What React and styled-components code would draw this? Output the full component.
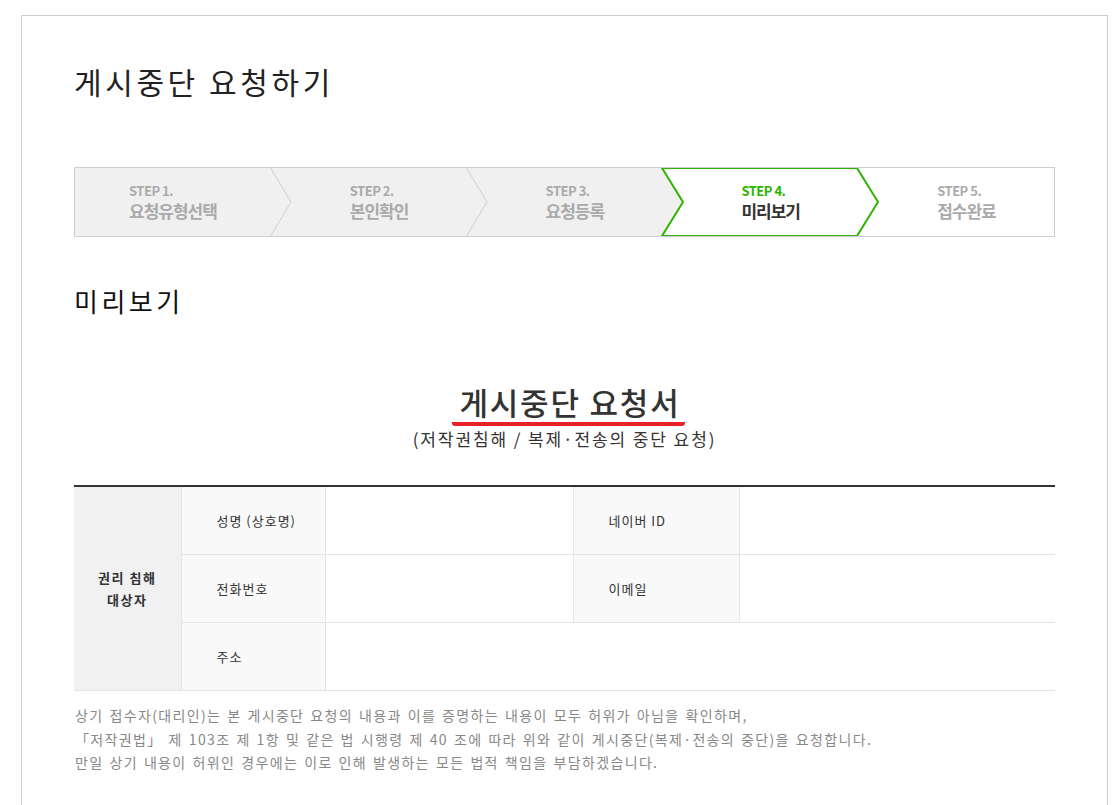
import React from "react";
import styled, { createGlobalStyle } from "styled-components";

const GlobalStyle = createGlobalStyle`
  html, body {
    margin: 0;
    padding: 0;
    background: #fff;
  }
  body {
    font-family: "Noto Sans CJK KR", "Noto Sans", sans-serif;
    color: #333;
  }
`;

const Page = styled.div`
  padding: 15px 0 0 21px;
`;

const Box = styled.main`
  width: 981px;
  padding: 40px 52px 60px;
  border: 1px solid #cfcfcf;
  border-bottom: none;
`;

const PageTitle = styled.h1`
  margin: 0;
  font-size: 30px;
  font-weight: 400;
  line-height: 50px;
  color: #222;
  letter-spacing: 3.6px;
`;

const StepBar = styled.ol`
  position: relative;
  margin: 61px 0 0;
  padding: 0;
  list-style: none;
  height: 68px;
  border: 1px solid #cfcfcf;
  display: grid;
  grid-template-columns: repeat(5, 1fr);
`;

const StepShape = styled.svg`
  position: absolute;
  inset: 0;
  z-index: 0;
`;

const Step = styled.li`
  position: relative;
  z-index: 1;
  display: flex;
  flex-direction: column;
  justify-content: center;
  gap: 1px;
  padding-left: ${(p) => (p.$first ? "54px" : "79px")};
  font-weight: 700;
  letter-spacing: -0.5px;
`;

const StepNo = styled.span`
  font-size: 13px;
  line-height: 16px;
  color: ${(p) => (p.$active ? "#2db400" : "#aaa")};
`;

const StepName = styled.span`
  font-size: 17px;
  line-height: 22px;
  color: ${(p) => (p.$active ? "#333" : "#aaa")};
  letter-spacing: -1px;
`;

const SectionTitle = styled.h2`
  margin: 48px 0 0;
  font-size: 26px;
  font-weight: 400;
  line-height: 32px;
  color: #111;
  letter-spacing: 3.5px;
`;

const DocHead = styled.header`
  margin-top: 65px;
  display: flex;
  flex-direction: column;
  align-items: center;
`;

const DocTitle = styled.h3`
  margin: 0;
  padding: 0 4px 0 7px;
  font-size: 31px;
  font-weight: 500;
  line-height: 40px;
  color: #333;
  letter-spacing: 1.8px;
  border-bottom: 4px solid #e8202a;
  border-radius: 0 0 3px 3px;
  transform: translateX(4px);
`;

const DocSub = styled.p`
  margin: 0;
  font-size: 17px;
  line-height: 26px;
  color: #333;
  letter-spacing: 1.9px;
`;

const Table = styled.table`
  width: 100%;
  margin-top: 33px;
  border-collapse: collapse;
  border-top: 2px solid #333;
  table-layout: fixed;
  font-size: 13px;
  color: #333;
`;

const GroupCell = styled.th`
  padding: 0;
  background: #f1f1f1;
  font-weight: 700;
  line-height: 22px;
  letter-spacing: 1.5px;
  border-bottom: 1px solid #e5e5e5;
  border-right: 1px solid #e5e5e5;
`;

const LabelCell = styled.th`
  height: 67px;
  padding: 0 0 0 35px;
  text-align: left;
  font-weight: 400;
  background: #f9f9f9;
  border: 1px solid #e5e5e5;
  border-top: none;
  letter-spacing: 1px;
`;

const ValueCell = styled.td`
  height: 67px;
  padding: 0;
  border-bottom: 1px solid #e5e5e5;
`;

const Notice = styled.p`
  margin: 13px 0 0 1px;
  font-size: 14px;
  line-height: 23.5px;
  color: #888;
  letter-spacing: 1.35px;
  word-spacing: 1.5px;
`;

const steps = [
  { no: "STEP 1.", name: "요청유형선택" },
  { no: "STEP 2.", name: "본인확인" },
  { no: "STEP 3.", name: "요청등록" },
  { no: "STEP 4.", name: "미리보기", active: true },
  { no: "STEP 5.", name: "접수완료" },
];

function StepBackground() {
  return (
    <StepShape width="979" height="68" viewBox="0 0 979 68" aria-hidden="true">
      <polygon points="0,0 587,0 608,34 587,68 0,68" fill="#f0f0f0" />
      <polyline points="195,-1 216,34 195,69" fill="none" stroke="#cfcfcf" />
      <polyline points="391,-1 412,34 391,69" fill="none" stroke="#cfcfcf" />
      <polygon
        points="587,0 782,0 803,34 782,68 587,68 608,34"
        fill="#fff"
        stroke="#2db400"
        strokeWidth="2"
        strokeLinejoin="miter"
      />
    </StepShape>
  );
}

export default function App() {
  return (
    <Page>
      <GlobalStyle />
      <Box>
        <PageTitle>게시중단 요청하기</PageTitle>

        <StepBar>
          <StepBackground />
          {steps.map((s, i) => (
            <Step key={s.no} $first={i === 0}>
              <StepNo $active={s.active}>{s.no}</StepNo>
              <StepName $active={s.active}>{s.name}</StepName>
            </Step>
          ))}
        </StepBar>

        <SectionTitle>미리보기</SectionTitle>

        <DocHead>
          <DocTitle>게시중단 요청서</DocTitle>
          <DocSub>(저작권침해 / 복제·전송의 중단 요청)</DocSub>
        </DocHead>

        <Table>
          <colgroup>
            <col style={{ width: 107 }} />
            <col style={{ width: 144 }} />
            <col style={{ width: 248 }} />
            <col style={{ width: 166 }} />
            <col />
          </colgroup>
          <tbody>
            <tr>
              <GroupCell rowSpan={3}>
                권리 침해
                <br />
                대상자
              </GroupCell>
              <LabelCell>성명 (상호명)</LabelCell>
              <ValueCell />
              <LabelCell>네이버 ID</LabelCell>
              <ValueCell />
            </tr>
            <tr>
              <LabelCell>전화번호</LabelCell>
              <ValueCell />
              <LabelCell>이메일</LabelCell>
              <ValueCell />
            </tr>
            <tr>
              <LabelCell>주소</LabelCell>
              <ValueCell colSpan={3} />
            </tr>
          </tbody>
        </Table>

        <Notice>
          상기 접수자(대리인)는 본 게시중단 요청의 내용과 이를 증명하는 내용이 모두 허위가 아님을 확인하며,
          <br />
          「저작권법」 제 103조 제 1항 및 같은 법 시행령 제 40 조에 따라 위와 같이 게시중단(복제·전송의 중단)을 요청합니다.
          <br />
          만일 상기 내용이 허위인 경우에는 이로 인해 발생하는 모든 법적 책임을 부담하겠습니다.
        </Notice>
      </Box>
    </Page>
  );
}
